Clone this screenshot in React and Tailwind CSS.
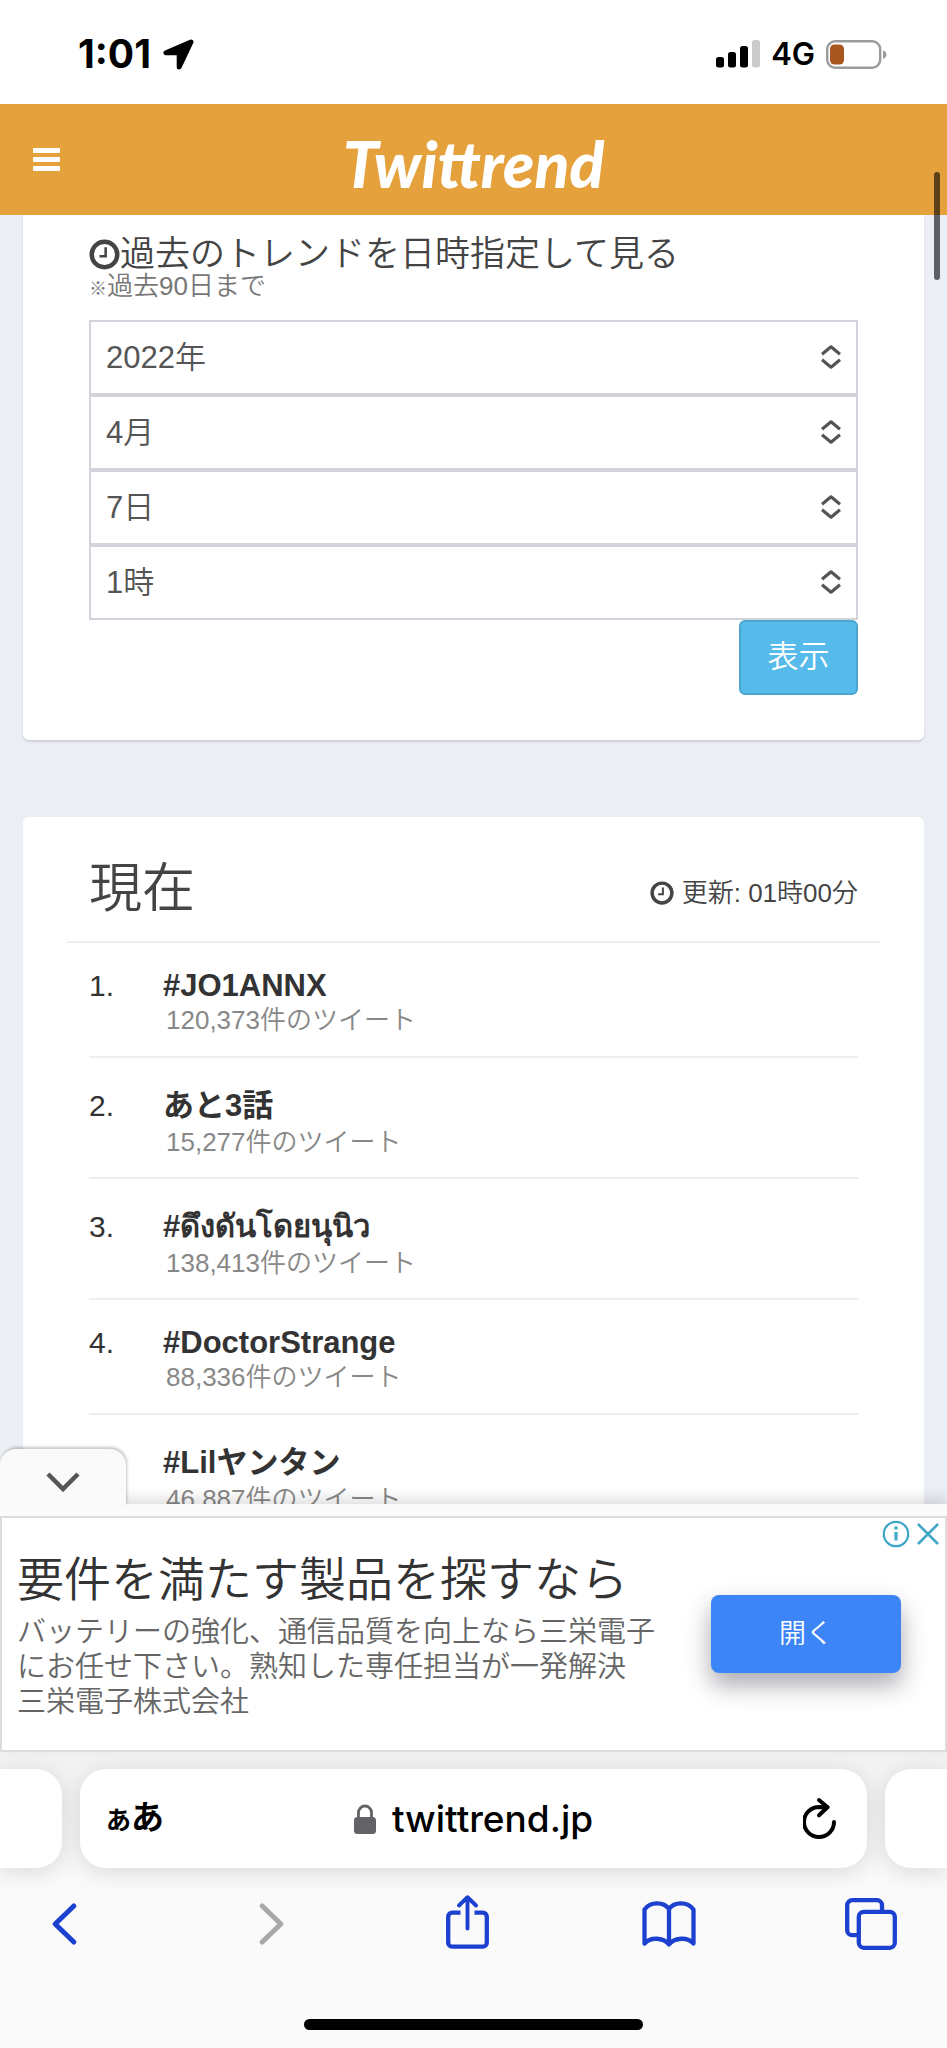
import React from "react";

const selects = [
  { id: "year", label: "年", value: "2022年" },
  { id: "month", label: "月", value: "4月" },
  { id: "day", label: "日", value: "7日" },
  { id: "hour", label: "時", value: "1時" },
];

const trends = [
  { name: "#JO1ANNX", count: "120,373", tall: false },
  { name: "あと3話", count: "15,277", tall: true },
  { name: "#ดึงดันโดยนุนิว", count: "138,413", tall: true },
  { name: "#DoctorStrange", count: "88,336", tall: false },
  { name: "#Lilヤンタン", count: "46,887", tall: true },
];

function Clock({ className }) {
  return (
    <svg viewBox="0 0 32 32" className={className} fill="none" stroke="currentColor" aria-hidden="true">
      <circle cx="16" cy="16" r="13.2" strokeWidth="4.6" />
      <path d="M17.2 8.5v9.2h-6.4" strokeWidth="2.6" />
    </svg>
  );
}

function StatusBar() {
  return (
    <div className="flex h-[104px] shrink-0 items-center justify-between bg-white pt-1 pr-[60px] pl-[78px] text-black">
      <div className="flex items-center gap-3">
        <span className="font-[Inter,sans-serif] text-[39px] leading-[40px] font-bold">1:01</span>
        <svg viewBox="0 0 31 31" className="size-[31px]" aria-hidden="true">
          <path d="M28 3 3 13.800h13.200V28z" fill="currentColor" stroke="currentColor" strokeWidth="5" strokeLinejoin="round" />
        </svg>
      </div>
      <div className="flex items-center gap-[11px]">
        <svg viewBox="0 0 44 28" className="h-7 w-11" aria-hidden="true">
          <rect x="0" y="17" width="8" height="10.500" rx="2.500" />
          <rect x="12" y="12" width="8" height="15.500" rx="2.500" />
          <rect x="24" y="6" width="8" height="21.500" rx="2.500" />
          <rect x="36" y="0" width="8" height="27.500" rx="2.500" fill="#cbcbcb" />
        </svg>
        <span className="font-[Inter,sans-serif] text-[31px] leading-[40px] font-semibold">4G</span>
        <svg viewBox="0 0 61 29" className="h-[29px] w-[61px]" aria-hidden="true">
          <rect x="1.200" y="1.200" width="53" height="26.600" rx="8" fill="none" stroke="#9b9b9b" strokeWidth="2.400" />
          <rect x="4" y="4.500" width="14" height="20" rx="4.500" fill="#a9561e" />
          <path d="M57 10.200c4.600 1.200 4.600 7.400 0 8.600z" fill="#9b9b9b" />
        </svg>
      </div>
    </div>
  );
}

function SiteHeader() {
  return (
    <header className="relative flex h-[111px] shrink-0 items-center justify-center bg-[#e5a13c] pt-2">
      <button type="button" aria-label="メニュー" className="absolute top-[44px] left-[33px] flex w-[27px] flex-col gap-1">
        <span className="h-[5px] w-full rounded-[1px] bg-white" />
        <span className="h-[5px] w-full rounded-[1px] bg-white" />
        <span className="h-[5px] w-full rounded-[1px] bg-white" />
      </button>
      <a href="#top" className="font-[Lato,cursive] text-[64px] leading-[72px] font-black text-white italic">
        Twittrend
      </a>
    </header>
  );
}

function DateForm() {
  return (
    <section className="rounded-b-md bg-white px-[66px] pt-[18px] pb-[45px] shadow-[0_2px_2px_#cfd2d8]">
      <h2 className="flex items-center text-[35px] leading-[42px] font-[350] text-[#444]">
        <Clock className="size-[31px] shrink-0" />
        過去のトレンドを日時指定して見る
      </h2>
      <p className="text-[26px] leading-[22px] font-[350] text-[#777]">
        <small className="text-[18px]">※</small>過去90日まで
      </p>
      <form className="mt-5 flex flex-col" onSubmit={(e) => e.preventDefault()}>
        {selects.map((s) => (
          <div key={s.id} className="relative">
            <select
              id={s.id}
              aria-label={s.label}
              className="block h-[75px] w-full appearance-none border-2 border-[#d3d3dc] bg-white px-[15px] pt-px text-[31px] font-[350] text-[#555]"
            >
              <option>{s.value}</option>
            </select>
            <svg viewBox="0 0 20 24" className="pointer-events-none absolute top-[25px] right-[17px] h-6 w-5" fill="none" stroke="#555" strokeWidth="3.200" strokeLinejoin="round" aria-hidden="true">
              <path d="m1 9.200 9-7.400 9 7.400M1 14.800l9 7.400 9-7.400" />
            </svg>
          </div>
        ))}
        <button type="submit" className="h-[75px] w-[119px] self-end rounded-md border-2 border-[#4ba6cf] bg-[#56bbea] text-[31px] font-[350] text-white">
          表示
        </button>
      </form>
    </section>
  );
}

function Trends() {
  return (
    <section className="mt-[77px] rounded-t-md bg-white px-11">
      <div className="flex h-[126px] items-end justify-between border-b-2 border-[#eee] px-[22px] pb-[14px] text-[#444]">
        <h1 className="text-[53px] leading-[76px] font-[350]">現在</h1>
        <p className="flex items-center gap-2 pb-[14px] text-[26px] leading-[40px] font-[350]">
          <Clock className="size-6" />
          更新: 01時00分
        </p>
      </div>
      <ol className="px-[22px] text-[#333]">
        {trends.map((t, i) => (
          <li key={t.name} className={`flex border-b-2 border-[#eee] ${t.tall ? "pt-[27px] pb-5" : "pt-6 pb-[21px]"}`}>
            <span className={`w-[74px] shrink-0 text-[30px] font-[350] ${t.tall ? "leading-[42px]" : "leading-[38px]"}`}>{i + 1}.</span>
            <div>
              <a href="#trend" className={`block text-[31px] font-bold ${t.tall ? "leading-[42px]" : "leading-[38px]"}`}>
                {t.name}
              </a>
              <p className="pl-[3px] text-[26px] leading-[30px] font-[350] text-[#888]">{t.count}件のツイート</p>
            </div>
          </li>
        ))}
      </ol>
    </section>
  );
}

function Ad() {
  return (
    <aside className="relative shrink-0 bg-[#fafafa] pt-3 shadow-[0_-6px_12px_rgba(0,0,0,0.12)]">
      <button type="button" aria-label="広告を閉じる" className="absolute -top-[55px] left-0 flex h-[57px] w-[126px] items-center justify-center rounded-t-2xl bg-[#fafafa] shadow-[1px_-2px_3px_rgba(0,0,0,0.22)]">
        <svg viewBox="0 0 34 20" className="mt-2 h-5 w-[34px]" fill="none" stroke="#555" strokeWidth="4.500" aria-hidden="true">
          <path d="m2 2 15 15L32 2" />
        </svg>
      </button>
      <div className="relative flex h-[236px] items-center justify-between border-2 border-[#dcdcdc] bg-white pr-11 pl-[15px]">
        <div>
          <h2 className="text-[47px] leading-[62px] font-[350] text-[#333]">要件を満たす製品を探すなら</h2>
          <p className="pt-1 text-[29px] leading-[35px] font-[350] text-[#666]">
            バッテリーの強化、通信品質を向上なら三栄電子
            <br />
            にお任せ下さい。熟知した専任担当が一発解決
            <br />
            三栄電子株式会社
          </p>
        </div>
        <button type="button" className="h-[78px] w-[190px] shrink-0 rounded-lg bg-[#3c85f6] text-[27px] font-[350] text-white shadow-[0_12px_24px_rgba(40,40,60,0.4)]">
          開く
        </button>
        <div className="absolute top-0 right-[5px] flex items-center gap-[6px] pt-[2px]">
          <svg viewBox="0 0 28 28" className="size-7" fill="none" stroke="#41a7c7" strokeWidth="2.200" aria-hidden="true">
            <circle cx="14" cy="14" r="12.200" />
            <path d="M14 12v8.500M14 6.500v3" strokeWidth="3.200" />
          </svg>
          <svg viewBox="0 0 24 24" className="size-6" fill="none" stroke="#41a7c7" strokeWidth="2.600" aria-hidden="true">
            <path d="m2 2 20 20M22 2 2 22" />
          </svg>
        </div>
      </div>
    </aside>
  );
}

function BrowserBar() {
  return (
    <footer className="flex shrink-0 flex-col overflow-hidden bg-[#fafafa]">
      <div className="flex gap-[18px] bg-linear-to-b from-[#f2f2f2] to-[#fafafa] pt-[17px] pb-4">
        <div className="h-[99px] w-[62px] rounded-r-[26px] bg-white shadow-[0_4px_24px_rgba(0,0,0,0.13)]" />
        <div className="flex h-[99px] flex-1 items-center justify-between rounded-[26px] bg-white px-[26px] text-black shadow-[0_4px_24px_rgba(0,0,0,0.13)]">
          <button type="button" className="w-[62px] text-left text-[33px] leading-[40px] font-bold whitespace-nowrap">
            <span className="text-[25px]">あ</span>あ
          </button>
          <div className="flex items-center gap-4">
            <svg viewBox="0 0 22 30" className="h-[30px] w-[22px]" aria-hidden="true">
              <rect x="0" y="13" width="22" height="17" rx="3.500" fill="#636267" />
              <path d="M4.500 14V8.500a6.500 6.500 0 0 1 13 0V14" fill="none" stroke="#636267" strokeWidth="2.800" />
            </svg>
            <span className="font-[Inter,sans-serif] text-[37px] leading-[44px] font-medium">twittrend.jp</span>
          </div>
          <button type="button" aria-label="再読み込み" className="flex w-[62px] justify-end">
            <svg viewBox="0 0 38 44" className="h-11 w-[38px]" fill="none" stroke="currentColor" strokeWidth="4" strokeLinecap="round" strokeLinejoin="round" aria-hidden="true">
              <path d="M31 25a15 15 0 1 1-15-15l8.500.3" />
              <path d="m16 3 8.500 7.300-8.500 8" />
            </svg>
          </button>
        </div>
        <div className="h-[99px] w-[62px] rounded-l-[26px] bg-white shadow-[0_4px_24px_rgba(0,0,0,0.13)]" />
      </div>
      <nav className="flex h-[80px] items-center justify-between pr-12 pl-9 text-[#1c40cf]">
        <button type="button" aria-label="戻る" className="flex w-14 justify-center">
          <svg viewBox="0 0 25 42" className="h-[42px] w-[25px]" fill="none" stroke="currentColor" strokeWidth="5" strokeLinecap="round" strokeLinejoin="round">
            <path d="M21.800 3 3.200 21l18.600 18" />
          </svg>
        </button>
        <button type="button" aria-label="進む" className="flex w-14 justify-end pr-[10px] text-[#a8a8a8]">
          <svg viewBox="0 0 25 42" className="h-[42px] w-[25px]" fill="none" stroke="currentColor" strokeWidth="5" strokeLinecap="round" strokeLinejoin="round">
            <path d="m3.200 3 18.600 18-18.600 18" />
          </svg>
        </button>
        <button type="button" aria-label="共有" className="flex w-14 justify-center pb-1">
          <svg viewBox="0 0 43 54" className="h-[54px] w-[43px]" fill="none" stroke="currentColor" strokeWidth="4.300" strokeLinejoin="round">
            <path d="M14.500 17.700H6.200a4 4 0 0 0-4 4v26a4 4 0 0 0 4 4h30.600a4 4 0 0 0 4-4v-26a4 4 0 0 0-4-4h-8.300" />
            <path d="M21.500 33.500V2.500M13 10.500l8.500-8.300 8.500 8.300" strokeWidth="3.900" strokeLinecap="round" />
          </svg>
        </button>
        <button type="button" aria-label="ブックマーク" className="flex w-14 justify-center">
          <svg viewBox="0 0 54 46" className="h-[46px] w-[54px]" fill="none" stroke="currentColor" strokeWidth="4.300" strokeLinejoin="round">
            <path d="M2.500 8.500C8.500.500 21.500.500 27 8 32.500.500 45.500.500 51.500 8.500V42.500C46 36 33 36 27 43.500 21 36 8 36 2.500 42.500zM27 8v35" />
          </svg>
        </button>
        <button type="button" aria-label="タブ" className="flex w-14 justify-center">
          <svg viewBox="0 0 52 52" className="size-[52px]" fill="none" stroke="currentColor" strokeWidth="4.300">
            <path d="M12 37.200H7.200a5 5 0 0 1-5-5V7.200a5 5 0 0 1 5-5H32a5 5 0 0 1 5 5V12" />
            <rect x="13.800" y="13.800" width="36" height="36" rx="5" />
          </svg>
        </button>
      </nav>
      <div className="flex justify-center pt-[55px] pb-[18px]">
        <div className="h-[11px] w-[339px] rounded-full bg-black" />
      </div>
    </footer>
  );
}

export default function App() {
  return (
    <div className="flex h-screen flex-col overflow-hidden bg-[#ebeef4] font-['Liberation_Sans','Noto_Sans_CJK_JP',sans-serif]">
      <StatusBar />
      <SiteHeader />
      <main className="relative min-h-0 flex-1 overflow-hidden px-[23px]">
        <DateForm />
        <Trends />
      </main>
      <Ad />
      <BrowserBar />
      <div className="absolute top-[172px] right-[7px] h-[108px] w-[6px] rounded-full bg-black/60" />
    </div>
  );
}
